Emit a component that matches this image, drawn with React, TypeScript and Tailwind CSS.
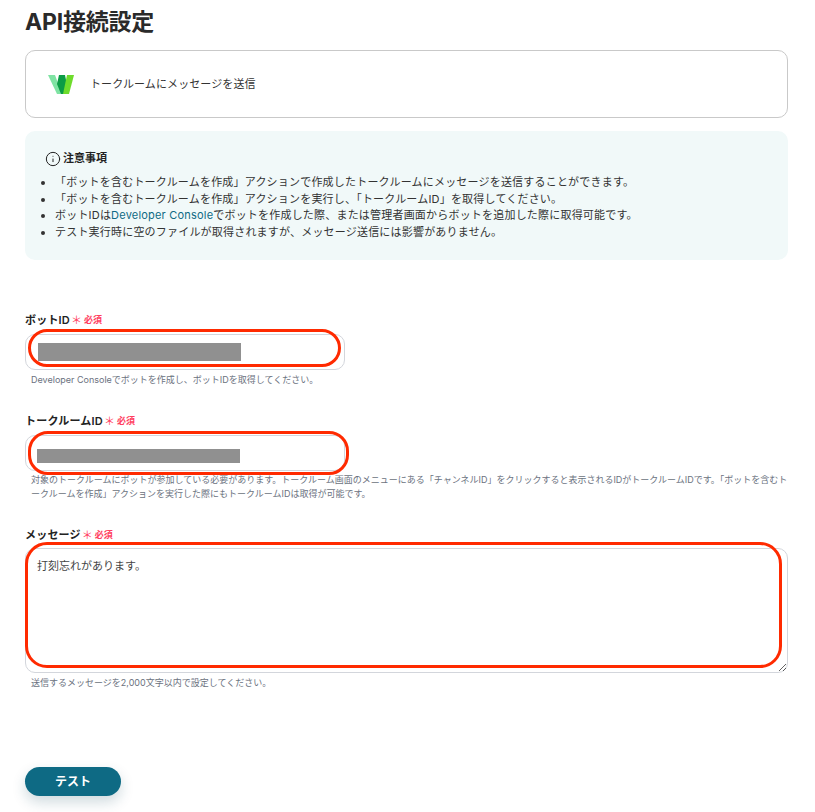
import { Info } from "lucide-react";

const jp = "font-['Inter','Noto_Sans_CJK_JP',sans-serif]";

const notes = [
  <>「ボットを含むトークルームを作成」アクションで作成したトークルームにメッセージを送信することができます。</>,
  <>「ボットを含むトークルームを作成」アクションを実行し、「トークルームID」を取得してください。</>,
  <>
    ボットIDは<span className="text-[#0e6a84]">Developer Console</span>でボットを作成した際、または管理者画面からボットを追加した際に取得可能です。
  </>,
  <>テスト実行時に空のファイルが取得されますが、メッセージ送信には影響がありません。</>,
];

function Label({ text }: { text: string }) {
  return (
    <div className="flex items-center h-[16px] leading-[16px]">
      <span className="text-[11px] font-semibold tracking-[0.2px] text-[#222]">{text}</span>
      <span className="ml-[1px] text-[11px] text-[#ff4060]">＊</span>
      <span className="ml-[2px] text-[9px] font-semibold text-[#ff4060]">必須</span>
    </div>
  );
}

function WorksLogo() {
  return (
    <svg width="28" height="21" viewBox="0 0 28 21" className="shrink-0">
      <path d="M1 1h7l7 19H10z" fill="#7fe3a3" />
      <path d="M12 1h6l2 10-3 9h-3l-4-10z" fill="#0b9c45" />
      <path d="M20 1h7l-5 19h-6z" fill="#6edc2c" />
    </svg>
  );
}

export default function App() {
  return (
    <div className={`${jp} w-[815px] h-[812px] overflow-hidden bg-white pl-[25px] pr-[27px] text-[#333]`}>
      <h1 className="h-[50px] pt-[6px] text-[23px] leading-[32px] font-bold tracking-[-0.2px] text-[#2a2a2a]">
        API接続設定
      </h1>

      <div className="flex items-center h-[68px] pl-[21px] rounded-[10px] border border-[#c9c9c9]">
        <WorksLogo />
        <span className="ml-[15px] text-[11px] tracking-[0.1px] text-[#333]">トークルームにメッセージを送信</span>
      </div>

      <div className="mt-[13px] h-[129px] rounded-[10px] bg-[#f1f9f9] pt-[20px]">
        <div className="flex items-center pl-[20px] h-[15px]">
          <Info size={16} strokeWidth={1.5} className="text-[#222]" />
          <span className="ml-[2px] text-[11px] font-semibold text-[#222]">注意事項</span>
        </div>
        <ul className="mt-[8px] list-disc pl-[30px] text-[11px] leading-[16.7px] text-[#333]">
          {notes.map((note, i) => (
            <li key={i} className="tracking-[0.2px]">
              {note}
            </li>
          ))}
        </ul>
      </div>

      <div className="mt-[52px]">
        <Label text="ボットID" />
        <div className="relative mt-[6px]">
          <input readOnly className="block w-[320px] h-[36px] rounded-[10px] border border-[#d3d6dc] bg-white" />
          <div className="absolute left-[13px] top-[9px] w-[203px] h-[18px] bg-[#909090]" />
          <div className="absolute left-[3px] top-[-5px] w-[313px] h-[38px] rounded-[19px] border-[3px] border-[#ff2a00]" />
        </div>
        <p className="mt-[3px] pl-[6px] text-[9px] leading-[13px] text-[#6b7280]">
          Developer Consoleでボットを作成し、ボットIDを取得してください。
        </p>
      </div>

      <div className="mt-[27px]">
        <Label text="トークルームID" />
        <div className="relative mt-[6px]">
          <input readOnly className="block w-[320px] h-[36px] rounded-[10px] border border-[#d3d6dc] bg-white" />
          <div className="absolute left-[12px] top-[14px] w-[203px] h-[14px] bg-[#909090]" />
          <div className="absolute left-[3px] top-[-4px] w-[321px] h-[44px] rounded-[20px] border-[3px] border-[#ff2a00]" />
        </div>
        <p className="mt-[2px] pl-[6px] text-[9px] leading-[14px] text-[#6b7280]">
          対象のトークルームにボットが参加している必要があります。トークルーム画面のメニューにある「チャンネルID」をクリックすると表示されるIDがトークルームIDです。「ボットを含むトークルームを作成」アクションを実行した際にもトークルームIDは取得が可能です。
        </p>
      </div>

      <div className="mt-[26px]">
        <Label text="メッセージ" />
        <div className="relative mt-[5px]">
          <textarea
            readOnly
            defaultValue="打刻忘れがあります。"
            className="block w-[763px] h-[125px] rounded-[10px] border border-[#d3d6dc] bg-white pl-[11px] pt-[9px] text-[11px] leading-[17px] text-[#444] outline-none"
          />
          <div className="absolute left-0 top-[-6px] w-[757px] h-[126px] rounded-[22px] border-[3px] border-[#ff2a00]" />
        </div>
        <p className="mt-[3px] pl-[6px] text-[9px] leading-[13px] text-[#6b7280]">
          送信するメッセージを2,000文字以内で設定してください。
        </p>
      </div>

      <button className="mt-[78px] block w-[96px] h-[29px] rounded-full bg-[#0e6a84] text-[12px] font-semibold text-white shadow-[0_6px_14px_rgba(14,70,90,0.2)]">
        テスト
      </button>
    </div>
  );
}
